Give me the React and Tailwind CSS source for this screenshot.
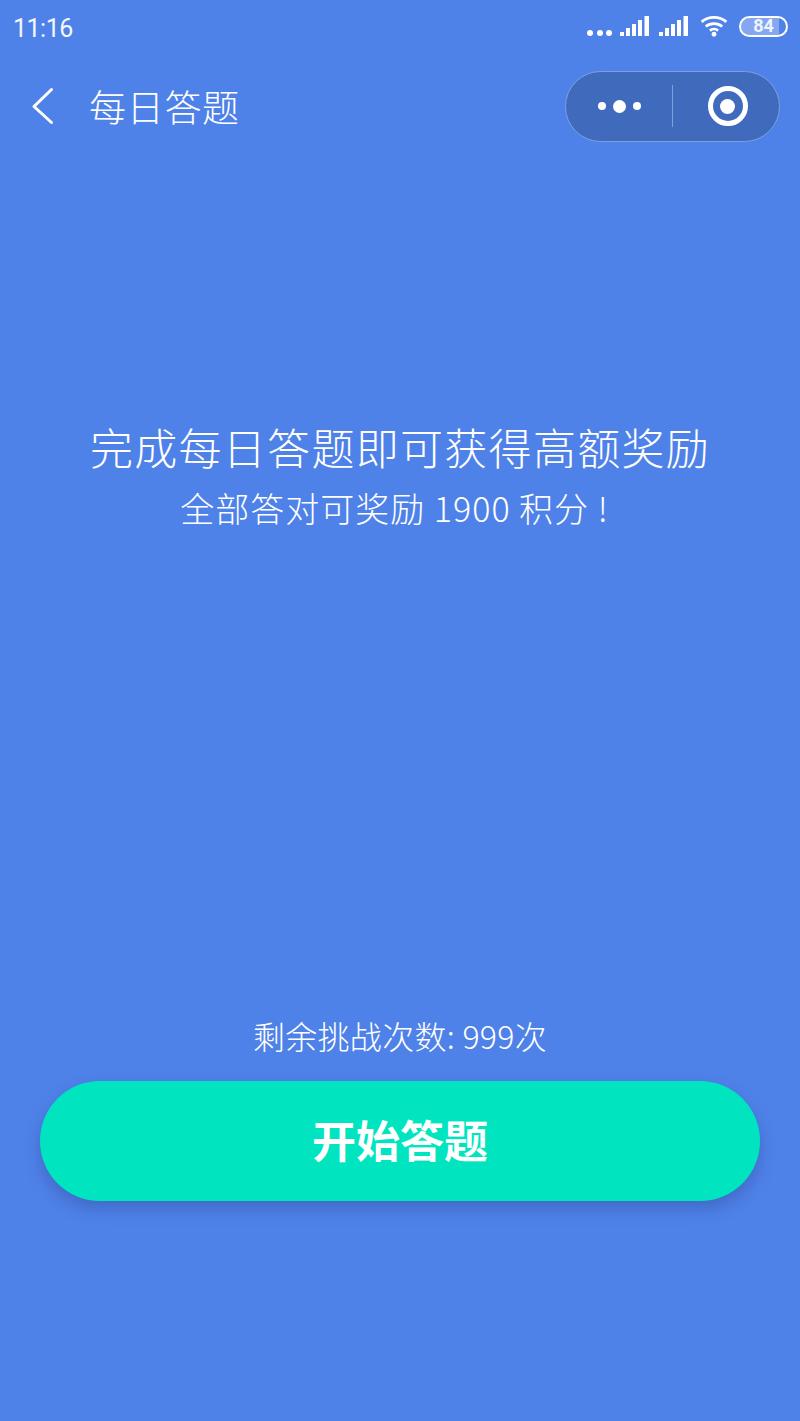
const font = { fontFamily: '"Noto Sans CJK SC", sans-serif' };

function Signal() {
  return (
    <svg width="30" height="22" viewBox="0 0 30 22" fill="#fff" className="block">
      <rect x="0" y="17" width="4" height="4" />
      <rect x="6" y="13" width="4" height="8" />
      <rect x="12" y="9" width="4" height="12" />
      <rect x="18" y="5" width="4" height="16" />
      <rect x="24.5" y="1" width="4.5" height="20" />
    </svg>
  );
}

export default function App() {
  return (
    <div className="w-[800px] h-[1421px] bg-[#4f82e8] text-white flex flex-col overflow-hidden" style={font}>
      <div className="h-[54px] flex items-center justify-between pl-[13px] pr-[12px] pt-[2px]">
        <span className="text-[25px] leading-none font-['Roboto',sans-serif] tracking-[-0.5px] text-[#f4f7fe]">11:16</span>
        <div className="flex items-center -mt-[4px]">
          <div className="flex gap-[3.5px] mr-[8px] mt-[14px]">
            <span className="w-[6px] h-[6px] rounded-full bg-white" />
            <span className="w-[6px] h-[6px] rounded-full bg-white" />
            <span className="w-[6px] h-[6px] rounded-full bg-white" />
          </div>
          <div className="mr-[9px]"><Signal /></div>
          <div className="mr-[10px]"><Signal /></div>
          <svg width="30" height="22" viewBox="0 0 30 24" fill="none" stroke="#fff" strokeWidth="3" className="mr-[10px]">
            <path d="M1.5 7.5C9 1 21 1 28.5 7.5" />
            <path d="M6 12.5C11 8.3 19 8.3 24 12.5" />
            <path d="M10.5 17C13 15 17 15 19.5 17" />
            <circle cx="15" cy="21" r="2.6" fill="#fff" stroke="none" />
          </svg>
          <div className="relative w-[49px] h-[21px] rounded-full border-2 border-white flex items-center justify-center overflow-hidden">
            <div className="absolute left-0 top-0 bottom-0 w-[38px] bg-white/30" />
            <span className="relative text-[18px] leading-none font-bold font-['Roboto',sans-serif] text-[#eef3fd]">84</span>
          </div>
        </div>
      </div>

      <div className="h-[88px] flex items-center justify-between pl-[30px] pr-[20px] mt-[8px]">
        <div className="flex items-center">
          <svg width="24" height="38" viewBox="0 0 24 38" fill="none" stroke="#fff" strokeWidth="3" strokeLinecap="round" strokeLinejoin="round" className="mr-[35px]">
            <path d="M21.5 2.5L4 19.5L21.5 35.5" />
          </svg>
          <span className="text-[37px] leading-none font-light tracking-[0.7px]">每日答题</span>
        </div>
        <div className="w-[215px] h-[71px] rounded-full bg-[#406bbd] border border-[#7c9fe0] flex items-center">
          <div className="w-[106px] flex items-center justify-center gap-[7px]">
            <span className="w-[8px] h-[8px] rounded-full bg-white" />
            <span className="w-[13px] h-[13px] rounded-full bg-white" />
            <span className="w-[8px] h-[8px] rounded-full bg-white" />
          </div>
          <div className="w-px h-[42px] bg-[#7c9fe0]" />
          <div className="flex-1 flex items-center justify-center pl-[3px]">
            <div className="w-[40px] h-[40px] rounded-full border-[5px] border-white flex items-center justify-center">
              <span className="w-[15px] h-[15px] rounded-full bg-white" />
            </div>
          </div>
        </div>
      </div>

      <div className="mt-[271px] flex flex-col items-center">
        <h1 className="text-[43px] leading-[50px] font-light tracking-[1.3px]">完成每日答题即可获得高额奖励</h1>
        <p className="text-[34px] leading-[44px] font-light mt-[15px] pr-[11px] whitespace-pre tracking-[1px]">全部答对可奖励 1900 积分 !</p>
      </div>

      <div className="mt-[485px] flex flex-col items-center">
        <p className="text-[32px] leading-[40px] font-light tracking-[0.3px]">剩余挑战次数: 999次</p>
      </div>

      <div className="mx-[40px] mt-[26px] h-[120px] rounded-full bg-[#00e5bf] shadow-[0_8px_16px_rgba(40,60,140,0.35)] flex items-center justify-center pb-[5px]">
        <span className="text-[44px] leading-none font-bold">开始答题</span>
      </div>
    </div>
  );
}
